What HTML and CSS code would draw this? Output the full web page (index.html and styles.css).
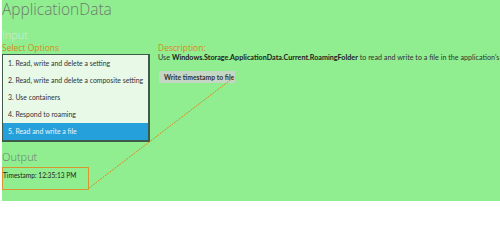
FILE: index.html
```html
<!DOCTYPE html>
<html>
<head>
<meta charset="utf-8">
<link rel="stylesheet" href="styles.css">
</head>
<body>
<div class="app">
  <h1 class="title">ApplicationData</h1>
  <div class="input-label">Input</div>
  <div class="columns">
    <div class="left">
      <div class="orange-label">Select Options</div>
      <ul class="list">
        <li>1. Read, write and delete a setting</li>
        <li>2. Read, write and delete a composite setting</li>
        <li>3. Use containers</li>
        <li>4. Respond to roaming</li>
        <li class="selected">5. Read and write a file</li>
      </ul>
    </div>
    <div class="right">
      <div class="orange-label">Description:</div>
      <div class="desc">Use <b>Windows.Storage.ApplicationData.Current.RoamingFolder</b> to read and write to a file in the application's roaming folder.</div>
      <button class="btn">Write timestamp to file</button>
    </div>
  </div>
  <div class="output-label">Output</div>
  <div class="output-box">Timestamp: 12:35:13 PM</div>
  <svg class="connector" width="500" height="203" viewBox="0 0 500 203">
    <line x1="233" y1="78" x2="89" y2="188" stroke="#e0861e" stroke-width="1" stroke-dasharray="2 1"/>
  </svg>
</div>
</body>
</html>
```
FILE: styles.css
```css
html, body {
  margin: 0;
  padding: 0;
  background: #ffffff;
}
body {
  font-family: "Lato", "Open Sans", sans-serif;
  width: 500px;
  height: 203px;
  overflow: hidden;
  position: relative;
}
.app {
  margin-left: 2px;
  width: 498px;
  height: 201px;
  background: #90ee90;
  overflow: hidden;
  white-space: nowrap;
}
.title {
  margin: 0;
  font-family: "Open Sans", sans-serif;
  font-weight: 300;
  font-size: 15.5px;
  line-height: 19px;
  color: #6e7a6e;
}
.input-label {
  margin-top: 9px;
  font-family: "Open Sans", sans-serif;
  font-size: 11px;
  line-height: 14px;
  font-weight: 300;
  color: #dce8dc;
}
.columns {
  display: flex;
  gap: 8px;
}
.left {
  width: 148px;
}
.right {
  flex: 1;
  display: flex;
  flex-direction: column;
  align-items: flex-start;
}
.orange-label {
  font-family: "Open Sans", sans-serif;
  font-size: 8.5px;
  line-height: 11px;
  color: #d88a1a;
}
.list {
  list-style: none;
  margin: 1px 0 0 0;
  padding: 0;
  width: 145px;
  background: #e8f9e8;
  border: 2px solid #3e5c4a;
  border-top-width: 1px;
  border-left-width: 1px;
}
.list li {
  height: 17px;
  line-height: 17px;
  font-size: 6.9px;
  padding-left: 5px;
  color: #333;
}
.list li.selected {
  background: #26a0da;
  color: #e6f4fb;
}
.desc {
  font-size: 7.2px;
  line-height: 9px;
  color: #333;
}
.desc b {
  font-weight: 700;
  color: #222;
}
.btn {
  margin-top: 9px;
  margin-left: 1px;
  font-family: inherit;
  font-size: 6.8px;
  font-weight: 700;
  color: #333;
  background: #c5d6c5;
  border: none;
  padding: 0 5px;
  height: 12px;
  line-height: 12px;
  width: 76px;
}
.output-label {
  margin-top: 8px;
  font-family: "Open Sans", sans-serif;
  font-size: 11px;
  line-height: 14px;
  font-weight: 300;
  color: #6e7a6e;
}
.output-box {
  margin-top: 3px;
  width: 85px;
  height: 21px;
  border: 1px solid #d9962e;
  font-size: 6.6px;
  line-height: 15px;
  color: #222;
}
.connector {
  position: absolute;
  left: 0;
  top: 0;
  pointer-events: none;
}
```
